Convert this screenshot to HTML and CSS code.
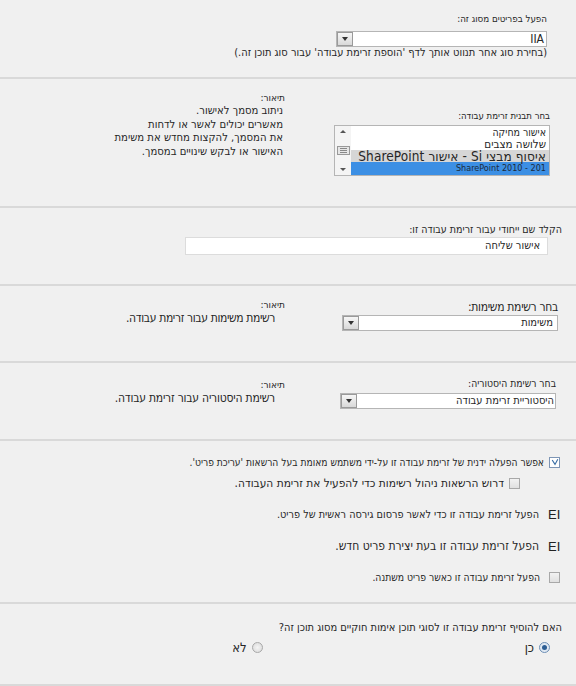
FILE: index.html
```html
<!DOCTYPE html>
<html lang="he" dir="rtl">
<head>
<meta charset="utf-8">
<link rel="stylesheet" href="styles.css">
</head>
<body>
<div class="page">

<section class="sec s1">
  <div class="lbl">הפעל בפריטים מסוג זה:</div>
  <div class="select sel1"><span class="val">IIA</span><span class="btn"><i class="tri"></i></span></div>
  <div class="note">(בחירת סוג אחר תנווט אותך לדף 'הוספת זרימת עבודה' עבור סוג תוכן זה.)</div>
</section>

<section class="sec s2 cols">
  <div class="main">
    <div class="lbl">בחר תבנית זרימת עבודה:</div>
    <div class="listbox">
      <div class="items">
        <div class="item i1">אישור מחיקה</div>
        <div class="item i2">שלושה מצבים</div>
        <div class="item i3 gray">איסוף מבצי Si - אישור SharePoint</div>
        <div class="item i4 sel"><span dir="ltr">SharePoint 2010 - 201</span></div>
      </div>
      <div class="scroll">
        <i class="up"></i>
        <span class="thumb"><b></b><b></b><b></b></span>
        <i class="down"></i>
      </div>
    </div>
  </div>
  <div class="desc d2">
    <div class="dtitle">תיאור:</div>
    <div class="dtext">ניתוב מסמך לאישור.<br>מאשרים יכולים לאשר או לדחות<br>את המסמך, להקצות מחדש את משימת<br>האישור או לבקש שינויים במסמך.</div>
  </div>
</section>

<section class="sec s3">
  <div class="lbl">הקלד שם ייחודי עבור זרימת עבודה זו:</div>
  <div class="input">אישור שליחה</div>
</section>

<section class="sec s4 cols">
  <div class="main">
    <div class="lbl">בחר רשימת משימות:</div>
    <div class="select sel4"><span class="val">משימות</span><span class="btn"><i class="tri"></i></span></div>
  </div>
  <div class="desc d4">
    <div class="dtitle">תיאור:</div>
    <div class="dtext">רשימת משימות עבור זרימת עבודה.</div>
  </div>
</section>

<section class="sec s5 cols">
  <div class="main">
    <div class="lbl">בחר רשימת היסטוריה:</div>
    <div class="select sel5"><span class="val">היסטוריית זרימת עבודה</span><span class="btn"><i class="tri"></i></span></div>
  </div>
  <div class="desc d5">
    <div class="dtitle">תיאור:</div>
    <div class="dtext">רשימת היסטוריה עבור זרימת עבודה.</div>
  </div>
</section>

<section class="sec s6">
  <div class="row r1"><span class="cb checked"><svg viewBox="0 0 10 10" width="8" height="8"><path d="M1.5 2.5 L5 8 L8.5 1.5" fill="none" stroke="#3a6ea5" stroke-width="1.4"/></svg></span><span class="t">אפשר הפעלה ידנית של זרימת עבודה זו על-ידי משתמש מאומת בעל הרשאות 'עריכת פריט'.</span></div>
  <div class="row r2"><span class="cb"></span><span class="t">דרוש הרשאות ניהול רשימות כדי להפעיל את זרימת העבודה.</span></div>
  <div class="row r3"><span class="ei">EI</span><span class="t">הפעל זרימת עבודה זו כדי לאשר פרסום גירסה ראשית של פריט.</span></div>
  <div class="row r4"><span class="ei">EI</span><span class="t">הפעל זרימת עבודה זו בעת יצירת פריט חדש.</span></div>
  <div class="row r5"><span class="cb"></span><span class="t">הפעל זרימת עבודה זו כאשר פריט משתנה.</span></div>
</section>

<section class="sec s7">
  <div class="lbl">האם להוסיף זרימת עבודה זו לסוגי תוכן אימות חוקיים מסוג תוכן זה?</div>
  <div class="radios">
    <span class="opt"><span class="radio on"></span><span class="rt">כן</span></span>
    <span class="opt"><span class="radio"></span><span class="rt">לא</span></span>
  </div>
</section>

</div>
</body>
</html>
```

FILE: styles.css
```css
body {
  margin: 0;
  background: #f0f0f0;
  font-family: "DejaVu Sans Condensed", "DejaVu Sans", sans-serif;
  font-size: 11px;
  color: #262626;
}
.page { width: 576px; }
.sec {
  box-sizing: border-box;
  border-bottom: 2px solid #d9d9d9;
}
.lbl { line-height: 14px; white-space: nowrap; }

/* select */
.select {
  box-sizing: border-box;
  display: flex;
  align-items: center;
  height: 16px;
  background: #fff;
  border: 1px solid #b5b5b5;
}
.select .val { flex: 1; padding-right: 4px; line-height: 14px; white-space: nowrap; }
.select .btn {
  box-sizing: border-box;
  width: 16px;
  height: 14px;
  border: 1px solid #9a9a9a;
  background: linear-gradient(#f6f6f6, #d8d8d8);
  display: flex;
  align-items: center;
  justify-content: center;
}
.tri {
  width: 0; height: 0;
  border-left: 3px solid transparent;
  border-right: 3px solid transparent;
  border-top: 4px solid #333;
}

/* section 1 */
.s1 { height: 79px; padding: 12px 29px 0 0; }
.s1 .lbl { font-size: 9.7px; }
.sel1 { width: 211px; margin-top: 5px; }
.sel1 .val { font-size: 12px; padding-right: 2px; }
.note { line-height: 12px; font-size: 11px; white-space: nowrap; }

/* two column sections */
.cols { display: flex; }
.main { width: 216px; }
.dtitle { line-height: 13px; font-size: 10px; }
.dtext { line-height: 13.5px; margin-right: 2px; font-size: 11.2px; white-space: nowrap; }

.s2 { height: 129px; padding-right: 26px; }
.s2 .main { padding-top: 30px; }
.s2 .lbl { font-size: 9.5px; }
.s2 .desc { margin-right: 49px; padding-top: 12px; }
.listbox {
  box-sizing: border-box;
  display: flex;
  width: 216px;
  height: 51px;
  margin-top: 2px;
  background: #fff;
  border: 1px solid #b5b5b5;
}
.items { flex: 1; min-width: 0; }
.item { height: 12px; line-height: 12px; padding-right: 3px; white-space: nowrap; }
.i1 { font-size: 10.5px; }
.i2 { font-size: 11.5px; }
.i3 { font-size: 13.5px; letter-spacing: 0.1px; }
.item.gray { background: #d6d6d6; }
.item.sel { background: #3c8fe4; color: #1c2a3a; font-size: 9px; height: 13px; line-height: 13px; }
.scroll {
  width: 16px;
  flex: none;
  background: #f4f4f4;
  display: flex;
  flex-direction: column;
  align-items: center;
  justify-content: space-between;
  padding: 4px 0;
  box-sizing: border-box;
}
.up, .down { width: 0; height: 0; border-left: 3px solid transparent; border-right: 3px solid transparent; }
.up { border-bottom: 3px solid #555; }
.down { border-top: 3px solid #555; }
.thumb {
  box-sizing: border-box;
  width: 13px; height: 9px;
  border: 1px solid #999;
  background: #e6e6e6;
  display: flex; flex-direction: column; justify-content: space-around; align-items: center;
  padding: 1px 0;
}
.thumb b { display: block; width: 7px; height: 1px; background: #888; }

/* section 3 */
.s3 { height: 78px; padding: 14px 14px 0 0; }
.s3 .lbl { font-size: 10.6px; }
.input {
  box-sizing: border-box;
  width: 363px;
  height: 18px;
  margin-top: 1px;
  margin-right: 14px;
  background: #fff;
  border: 1px solid #dcdcdc;
  padding-right: 7px;
  line-height: 16px;
  font-size: 11px;
}

/* section 4 */
.s4 { height: 77px; padding-right: 18px; }
.s4 .main { padding-top: 13px; width: 224px; }
.s4 .lbl { line-height: 16px; font-size: 12px; letter-spacing: -0.3px; }
.sel4 { width: 216px; }
.s4 .desc { margin-right: 49px; padding-top: 12px; }
.d4 .dtext, .d5 .dtext { margin-right: 10px; line-height: 15px; font-size: 12px; }
.d4 .dtext { letter-spacing: -0.37px; }
.d5 .dtext { letter-spacing: -0.22px; }

/* section 5 */
.s5 { height: 78px; padding-right: 20px; }
.s5 .main { padding-top: 13px; width: 223px; }
.s5 .lbl { font-size: 10.3px; }
.sel5 { width: 216px; margin-top: 3px; }
.sel5 .val { padding-right: 1px; }
.s5 .desc { margin-right: 48px; padding-top: 15px; }

/* section 6 */
.s6 { height: 163px; padding-top: 14px; }
.row { display: flex; align-items: center; height: 14px; white-space: nowrap; }
.cb {
  box-sizing: border-box;
  flex: none;
  width: 11px; height: 11px;
  border: 1px solid #a8a8a8;
  background: linear-gradient(#f2f2f2, #e0e0e0);
  display: inline-flex; align-items: center; justify-content: center;
}
.cb.checked { background: #fff; border-color: #7d95b5; }
.r1 { padding-right: 16px; }
.r1 .cb { margin-left: 5px; }
.r1 .t { font-size: 10.2px; }
.r2 { padding-right: 56px; margin-top: 7px; }
.r2 .cb { margin-left: 5px; }
.r2 .t { font-size: 11.8px; }
.ei { font-size: 13px; width: 14px; color: #222; margin-left: 9px; text-align: left; font-family: "Liberation Sans", sans-serif; }
.r3 { padding-right: 14px; margin-top: 17px; }
.r3 .t { font-size: 10.8px; }
.r4 { padding-right: 14px; margin-top: 18px; }
.r4 .t { font-size: 12px; }
.r5 { padding-right: 16px; margin-top: 17px; }
.r5 .cb { margin-left: 9px; }
.r5 .t { font-size: 10.3px; }

/* section 7 */
.s7 { height: 82px; padding: 17px 14px 0 0; }
.s7 .lbl { font-size: 11px; }
.radios { display: flex; gap: 262px; margin-top: 5px; padding-right: 12px; }
.opt { display: flex; align-items: center; gap: 5px; }
.rt { font-size: 13px; }
.radio {
  box-sizing: border-box;
  width: 11px; height: 11px; border-radius: 50%;
  border: 1px solid #a8a8a8;
  background: radial-gradient(#f4f4f4, #d8d8d8);
  display: inline-flex; align-items: center; justify-content: center;
}
.radio.on { border-color: #6d8fb5; background: #dfe8f2; }
.radio.on::after { content: ""; width: 5px; height: 5px; border-radius: 50%; background: #2d5e94; }
```
